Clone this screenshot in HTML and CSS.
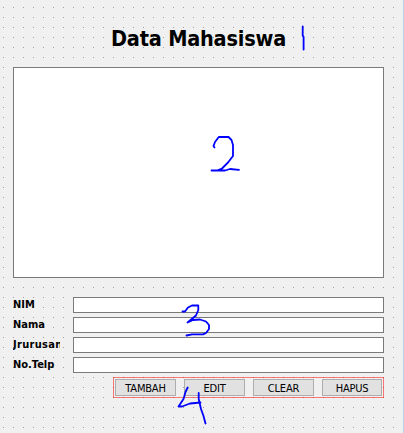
FILE: index.html
```html
<!DOCTYPE html>
<html lang="id">
<head>
<meta charset="utf-8">
<title>Data Mahasiswa</title>
<link rel="stylesheet" href="styles.css">
</head>
<body>
<main class="form">
  <h1 class="title">Data Mahasiswa</h1>
  <div class="table"></div>
  <div class="fields">
    <label class="row"><span class="label nim">NIM</span><input class="input" type="text"></label>
    <label class="row"><span class="label">Nama</span><input class="input" type="text"></label>
    <label class="row"><span class="label jurusan">Jrurusan</span><input class="input" type="text"></label>
    <label class="row"><span class="label">No.Telp</span><input class="input" type="text"></label>
  </div>
  <div class="actions">
    <button class="button" type="button">TAMBAH</button>
    <button class="button" type="button">EDIT</button>
    <button class="button" type="button">CLEAR</button>
    <button class="button" type="button">HAPUS</button>
  </div>
  <svg class="ink" viewBox="0 0 404 433" aria-hidden="true">
    <path d="M302.7 26.5V35.5L303.6 37V49.5"/>
    <path d="M214.5 147.5L213.5 146L215 142L218.8 137H228.5L231.5 140L233 145V156L228 162.5L222 168.5L217 170.5H211.5M217 170.5H225L230 169L239 169.8"/>
    <path d="M182.500 311.500H185L188 307.500L192 305.500H198.300V310L196 315.500L187.500 322.500L193 320L200 319.500L206 321.500L209 325V329L206 333L203 334.300H192L186.500 335.500"/>
    <path d="M187.700 387.500L185.500 392L183.500 399L178.500 406.500H182L190 403.500L200.500 402.500M198.700 393V399L201 409L203.500 416L205.500 423.500"/>
  </svg>
</main>
</body>
</html>
```
FILE: styles.css
```css
* { box-sizing: border-box; }

body { margin: 0; }

.form {
  position: relative;
  width: 404px;
  height: 433px;
  overflow: hidden;
  padding: 27px 19px 0 13px;
  border-right: 1px solid #b9d1ea;
  background:
    linear-gradient(90deg, transparent 1px, #f0f0f0 1px) 3px 7px / 10px 10px,
    linear-gradient(#a0a0a0 1px, #f0f0f0 1px) 3px 7px / 10px 10px;
  font-family: "DejaVu Sans Condensed", "DejaVu Sans", sans-serif;
  color: #000;
}

.title {
  height: 40px;
  margin: 0;
  padding-left: 98px;
  font-size: 21.500px;
  line-height: 23px;
  font-weight: bold;
  letter-spacing: -0.200px;
  white-space: nowrap;
}

.table {
  width: 371px;
  height: 211px;
  border: 1px solid #7a7a7a;
  background: #fff;
}

.fields {
  display: grid;
  gap: 4px;
  margin-top: 19px;
}

.row { display: flex; height: 16px; }

.label {
  width: 47px;
  margin-right: 13px;
  overflow: hidden;
  font-size: 11px;
  line-height: 15px;
  font-weight: bold;
  white-space: nowrap;
}

.jurusan { letter-spacing: 0.300px; }

.input {
  width: 311px;
  height: 16px;
  padding: 0 2px;
  border: 1px solid #7a7a7a;
  background: #fff;
  outline: none;
}

.actions {
  display: grid;
  grid-template-columns: 61px 61px 61px 60px;
  gap: 8px;
  width: 271px;
  height: 21px;
  margin: 4px 0 0 100px;
  padding: 1px;
  border: 1px solid rgba(255, 0, 0, 0.5);
}

.button {
  height: 17px;
  padding: 0;
  border: 1px solid #adadad;
  background: #e1e1e1;
  color: #000;
  font-family: inherit;
  font-size: 11px;
  line-height: 17px;
  letter-spacing: -0.200px;
}

.ink {
  position: absolute;
  top: 0;
  left: 0;
  width: 404px;
  height: 433px;
  fill: none;
  stroke: #00f;
  stroke-width: 1.800;
  stroke-linecap: round;
  stroke-linejoin: round;
  pointer-events: none;
}
```
